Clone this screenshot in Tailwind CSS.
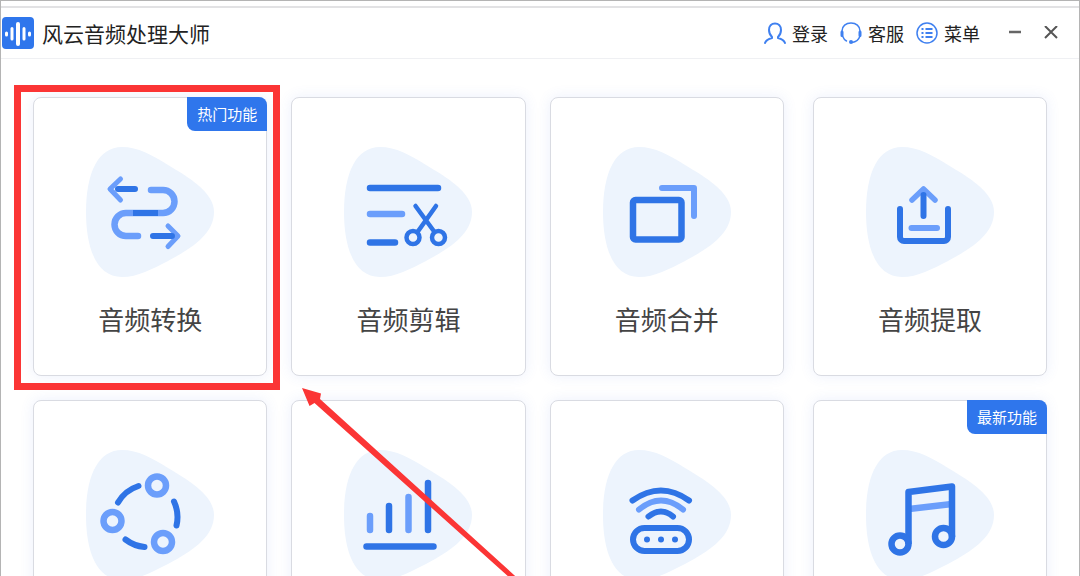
<!DOCTYPE html>
<html lang="zh-CN">

<head>
    <meta charset="UTF-8">
    <meta name="viewport" content="width=device-width, initial-scale=1.0">
    <script src="https://cdn.jsdelivr.net/npm/@tailwindcss/browser@4"></script>
    <title>风云音频处理大师</title>
</head>

<body class="h-screen overflow-hidden border-x border-t border-[#b4b4b4] bg-white font-['Noto_Sans_CJK_SC',sans-serif]">
    <!-- shared background shape of every card icon -->
    <svg class="hidden">
        <symbol id="blob" viewBox="0 0 128 130">
            <path fill="#edf4fd" d="M0 65C0 26 12 0 36 0C52 0 66 8 82 18C102 30 128 45 128 65C128 88 104 102 82 114C66 122 52 130 36 130C12 130 0 104 0 65Z" />
        </symbol>
    </svg>

    <header class="mt-[5px] flex h-[53px] items-center justify-between border-t-2 border-b border-t-[#e2e2e4] border-b-[#eff0f3] pr-[21px] pl-px">
        <div class="flex items-center gap-2">
            <svg class="size-8" viewBox="0 0 32 32">
                <rect width="32" height="32" rx="4" fill="#2f76ec" />
                <path stroke="#fff" stroke-width="3" stroke-linecap="round" d="M4.5 16v2M10 11.500v10.500M22 11.500v10.500M27.500 16v2" />
                <path stroke="#fff" stroke-width="4" stroke-linecap="round" d="M16 7v20" />
            </svg>
            <h1 class="text-[21px] leading-8 text-[#222]">风云音频处理大师</h1>
        </div>
        <nav class="flex items-center gap-3 text-[18px] leading-6 text-[#222]">
            <a href="#" class="flex items-center gap-[6px]">
                <svg class="size-[22px]" viewBox="0 0 22 22" fill="none" stroke="#3f80f0" stroke-width="2" stroke-linecap="round" stroke-linejoin="round">
                    <path d="M1 21c1-3 3-4 7-5v-1c-2-2-3-4-3-7 0-4 2.500-6.500 6-6.500s6 2.500 6 6.500c0 3-1 5-3 7v1c4 1 6 2 7 5" />
                </svg>
                登录
            </a>
            <a href="#" class="flex items-center gap-[6px]">
                <svg class="size-[22px]" viewBox="0 0 22 22" fill="none" stroke="#3f80f0" stroke-linecap="round">
                    <path stroke-width="1.5" d="M2 9c0-5 4-8 9-8s9 3 9 8M20 14c-1 3-4 6-8 6.500M2.500 14c1 2.500 2 4 4 5" />
                    <path stroke-width="3" d="M2 10v3.500M20 10v3.500" />
                    <circle cx="11" cy="20" r="2" fill="#3f80f0" stroke="none" />
                </svg>
                客服
            </a>
            <button class="flex items-center gap-[6px]">
                <svg class="size-[22px]" viewBox="0 0 22 22" fill="none" stroke="#3f80f0">
                    <circle cx="11" cy="11" r="10" stroke-width="1.5" />
                    <path stroke-width="2" d="M5.500 7h2M5.500 11h2M5.500 15h2M9.500 7h7M9.500 11h7M9.500 15h7" />
                </svg>
                菜单
            </button>
            <button class="ml-4" aria-label="最小化">
                <svg class="size-[14px]" viewBox="0 0 14 14" stroke="#666" stroke-width="2.5"><path d="M1 6h12" /></svg>
            </button>
            <button class="ml-[10px]" aria-label="关闭">
                <svg class="size-[14px]" viewBox="0 0 14 14" stroke="#555" stroke-width="2"><path d="M1 0l12 12M13 0L1 12" /></svg>
            </button>
        </nav>
    </header>

    <main class="grid grid-cols-[751fr_234fr] gap-x-[29px] gap-y-6 px-8 pt-[38px] text-[26px] leading-9 text-[#444]">
        <div class="grid grid-cols-3 gap-6">
            <button class="relative flex min-h-[279px] flex-col items-center gap-6 rounded-lg border border-[#d9dbe2] bg-white pt-[49px] shadow-[0_0_14px_rgba(70,110,230,0.1)]">
                <span class="absolute -top-px -right-px rounded-tr-lg rounded-bl-lg bg-[#2f76ec] px-[10px] py-[5px] text-[15px] leading-6 text-white">热门功能</span>
                <span class="absolute -top-[13px] -right-[14px] -bottom-[15px] -left-5 border-[7px] border-[#fb3535]"></span>
                <svg class="h-[130px] w-32" viewBox="0 0 128 130" fill="none" stroke-linecap="round" stroke-linejoin="round">
                    <use href="#blob" />
                    <path stroke="#6b9efb" stroke-width="6.5" d="M65 43h12a11.500 11.500 0 0 1 0 23H40a11.500 11.500 0 0 0 0 23h12" />
                    <path stroke="#6b9efb" stroke-width="5" d="M34.500 32L24 42l10.500 11M82 79l10 10-10 10.500" />
                    <path stroke="#2f74e6" stroke-width="6" d="M32 42h17M67 89h19" />
                    <path stroke="#2f74e6" stroke-width="6" stroke-linecap="butt" d="M47 66h25" />
                </svg>
                <span>音频转换</span>
            </button>
            <button class="flex min-h-[279px] flex-col items-center gap-6 rounded-lg border border-[#d9dbe2] bg-white pt-[49px] shadow-[0_0_14px_rgba(70,110,230,0.1)]">
                <svg class="h-[130px] w-32" viewBox="0 0 128 130" fill="none" stroke="#2f74e6" stroke-linecap="round">
                    <use href="#blob" stroke="none" />
                    <path stroke-width="6.5" d="M26 41H94M26 95.500H51" />
                    <path stroke="#6b9efb" stroke-width="6.5" d="M26 67H58" />
                    <path stroke-width="4.5" d="M71.500 59L90.500 85M92 59L73.500 85" />
                    <circle cx="69" cy="90.5" r="6.5" stroke-width="4.5" />
                    <circle cx="94.5" cy="90.5" r="6.5" stroke-width="4.5" />
                </svg>
                <span>音频剪辑</span>
            </button>
            <button class="flex min-h-[279px] flex-col items-center gap-6 rounded-lg border border-[#d9dbe2] bg-white pt-[49px] shadow-[0_0_14px_rgba(70,110,230,0.1)]">
                <svg class="h-[130px] w-32" viewBox="0 0 128 130" fill="none" stroke-width="6.5" stroke-linecap="round" stroke-linejoin="round">
                    <use href="#blob" />
                    <rect x="30" y="53" width="48.5" height="39.5" rx="2.5" stroke="#2f74e6" />
                    <path stroke="#6b9efb" stroke-width="6" d="M59 41h32v28" />
                </svg>
                <span>音频合并</span>
            </button>
        </div>
        <button class="flex min-h-[279px] flex-col items-center gap-6 rounded-lg border border-[#d9dbe2] bg-white pt-[49px] shadow-[0_0_14px_rgba(70,110,230,0.1)]">
            <svg class="h-[130px] w-32" viewBox="0 0 128 130" fill="none" stroke-width="6" stroke-linecap="round" stroke-linejoin="round">
                <use href="#blob" />
                <path stroke="#6b9efb" stroke-width="5.5" d="M46 53l11.500-11L69 53" />
                <path stroke="#6b9efb" d="M45.500 81h25.500" />
                <path stroke="#2f74e6" d="M34 62v28a4 4 0 0 0 4 4h40a4 4 0 0 0 4-4V62M57.500 48v21" />
            </svg>
            <span>音频提取</span>
        </button>

        <div class="grid grid-cols-3 gap-6">
            <button aria-label="格式工具" class="flex min-h-[279px] flex-col items-center rounded-lg border border-[#d9dbe2] bg-white pt-[49px] shadow-[0_0_14px_rgba(70,110,230,0.1)]">
                <svg class="h-[130px] w-32" viewBox="0 0 128 130" fill="none" stroke="#6b9efb" stroke-width="6.5" stroke-linecap="round">
                    <use href="#blob" stroke="none" />
                    <circle cx="71" cy="35.5" r="9" />
                    <circle cx="26.5" cy="71" r="9" />
                    <circle cx="77" cy="92" r="9" />
                    <path stroke="#2f74e6" stroke-width="6" d="M32 52.500a37 37 0 0 1 20.500-16.500M88 51.500a37 37 0 0 1 2.500 24M39.500 89.500a37 37 0 0 0 19 7.500" />
                </svg>
            </button>
            <button aria-label="音量调整" class="relative flex min-h-[279px] flex-col items-center rounded-lg border border-[#d9dbe2] bg-white pt-[49px] shadow-[0_0_14px_rgba(70,110,230,0.1)]">
                <svg class="h-[130px] w-32" viewBox="0 0 128 130" fill="none" stroke-width="6.5" stroke-linecap="round">
                    <use href="#blob" />
                    <path stroke="#6b9efb" d="M26 66v14M64.500 47v33" />
                    <path stroke="#2f74e6" d="M45 56v24M84 33v47M22.500 96.500h67" />
                </svg>
                <!-- pointer to the first card -->
                <svg class="absolute -top-[14px] left-[10px] z-10 h-[204px] w-[230px]" viewBox="0 0 230 204" fill="#fb3535">
                    <path d="M0 1L19 6.500 18 12 228 202.500 222.500 204 12.500 16 7.500 19Z" />
                </svg>
            </button>
            <button aria-label="录音" class="flex min-h-[279px] flex-col items-center rounded-lg border border-[#d9dbe2] bg-white pt-[49px] shadow-[0_0_14px_rgba(70,110,230,0.1)]">
                <svg class="h-[130px] w-32" viewBox="0 0 128 130" fill="none" stroke="#2f74e6" stroke-width="6" stroke-linecap="round">
                    <use href="#blob" stroke="none" />
                    <path d="M29.500 50.500q28.500-20 56.500 0M45.500 66.500q12.500-10 24.500 0" />
                    <path stroke="#6b9efb" d="M36 59.500q22-18 44 0" />
                    <rect x="30" y="78" width="56" height="23" rx="11.5" />
                    <g fill="#2f74e6" stroke="none">
                        <circle cx="44" cy="89.5" r="3" />
                        <circle cx="58" cy="89.5" r="3" />
                        <circle cx="72" cy="89.5" r="3" />
                    </g>
                </svg>
            </button>
        </div>
        <button aria-label="音乐" class="relative flex min-h-[279px] flex-col items-center rounded-lg border border-[#d9dbe2] bg-white pt-[49px] shadow-[0_0_14px_rgba(70,110,230,0.1)]">
            <span class="absolute -top-px -right-px rounded-tr-lg rounded-bl-lg bg-[#2f76ec] px-[10px] py-[5px] text-[15px] leading-6 text-white">最新功能</span>
            <svg class="h-[130px] w-32" viewBox="0 0 128 130" fill="none" stroke="#2f74e6" stroke-width="6.5" stroke-linejoin="round">
                <use href="#blob" stroke="none" />
                <path stroke="#6b9efb" d="M43 59l43-5" />
                <path d="M42.500 94V42L86 36.500V87" />
                <circle cx="34" cy="94" r="8.5" />
                <circle cx="77.5" cy="86.5" r="8.5" />
            </svg>
        </button>
    </main>
</body>

</html>
